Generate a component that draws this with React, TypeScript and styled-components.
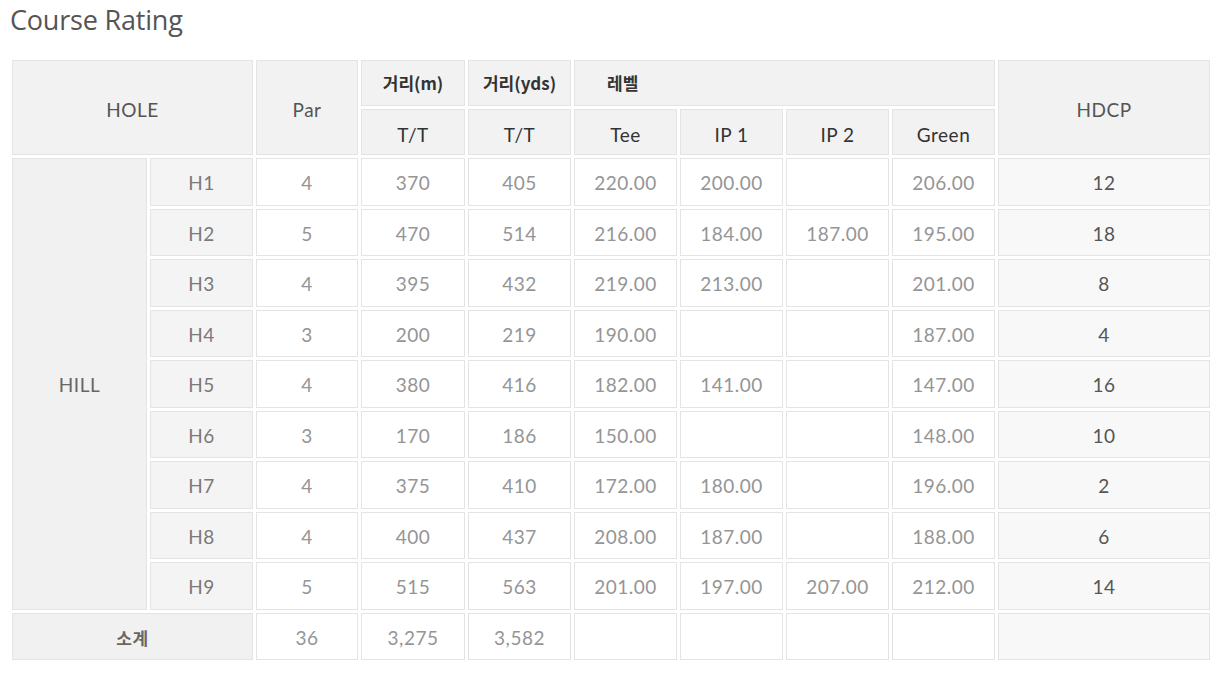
import { createGlobalStyle } from 'styled-components';
import styled from 'styled-components';

type Hole = {
  no: string;
  par: number;
  m: number;
  yds: number;
  tee: string;
  ip1: string;
  ip2: string;
  green: string;
  hdcp: number;
};

const holes: Hole[] = [
  { no: 'H1', par: 4, m: 370, yds: 405, tee: '220.00', ip1: '200.00', ip2: '', green: '206.00', hdcp: 12 },
  { no: 'H2', par: 5, m: 470, yds: 514, tee: '216.00', ip1: '184.00', ip2: '187.00', green: '195.00', hdcp: 18 },
  { no: 'H3', par: 4, m: 395, yds: 432, tee: '219.00', ip1: '213.00', ip2: '', green: '201.00', hdcp: 8 },
  { no: 'H4', par: 3, m: 200, yds: 219, tee: '190.00', ip1: '', ip2: '', green: '187.00', hdcp: 4 },
  { no: 'H5', par: 4, m: 380, yds: 416, tee: '182.00', ip1: '141.00', ip2: '', green: '147.00', hdcp: 16 },
  { no: 'H6', par: 3, m: 170, yds: 186, tee: '150.00', ip1: '', ip2: '', green: '148.00', hdcp: 10 },
  { no: 'H7', par: 4, m: 375, yds: 410, tee: '172.00', ip1: '180.00', ip2: '', green: '196.00', hdcp: 2 },
  { no: 'H8', par: 4, m: 400, yds: 437, tee: '208.00', ip1: '187.00', ip2: '', green: '188.00', hdcp: 6 },
  { no: 'H9', par: 5, m: 515, yds: 563, tee: '201.00', ip1: '197.00', ip2: '207.00', green: '212.00', hdcp: 14 },
];

const colWidths = [135, 103, 102, 104, 103, 103, 103, 103, 103, 212];

const GlobalStyle = createGlobalStyle`
  * { box-sizing: border-box; }
  body {
    margin: 0;
    background: #fff;
    font-family: Lato, "Noto Sans CJK KR", sans-serif;
  }
`;

export default function App() {
  return (
    <Page>
      <GlobalStyle />
      <Title>Course Rating</Title>
      <Table>
        <colgroup>
          {colWidths.map((w, i) => (
            <col key={i} style={{ width: w }} />
          ))}
        </colgroup>
        <thead>
          <tr>
            <Th colSpan={2} rowSpan={2}>HOLE</Th>
            <Th rowSpan={2}>Par</Th>
            <Th $ko>거리(m)</Th>
            <Th $ko>거리(yds)</Th>
            <Th $ko colSpan={4} $left>
              레벨
            </Th>
            <Th rowSpan={2}>HDCP</Th>
          </tr>
          <tr>
            <Th $dark>T/T</Th>
            <Th $dark>T/T</Th>
            <Th $dark>Tee</Th>
            <Th $dark>IP 1</Th>
            <Th $dark>IP 2</Th>
            <Th $dark>Green</Th>
          </tr>
        </thead>
        <tbody>
          {holes.map((h, i) => (
            <tr key={h.no}>
              {i === 0 && <Course rowSpan={9}>HILL</Course>}
              <HoleCell>{h.no}</HoleCell>
              <Td>{h.par}</Td>
              <Td>{h.m}</Td>
              <Td>{h.yds}</Td>
              <Td>{h.tee}</Td>
              <Td>{h.ip1}</Td>
              <Td>{h.ip2}</Td>
              <Td>{h.green}</Td>
              <Hdcp>{h.hdcp}</Hdcp>
            </tr>
          ))}
          <tr>
            <Course colSpan={2} $ko>
              소계
            </Course>
            <Td>36</Td>
            <Td>3,275</Td>
            <Td>3,582</Td>
            <Td />
            <Td />
            <Td />
            <Td />
            <Hdcp />
          </tr>
        </tbody>
      </Table>
    </Page>
  );
}

const Page = styled.div`
  padding: 3px 0 0 9px;
`;

const Title = styled.h2`
  margin: 0 0 0 1px;
  height: 54px;
  font-family: "Open Sans", "Noto Sans", sans-serif;
  font-weight: 400;
  font-size: 27px;
  line-height: 34px;
  color: #555;
  letter-spacing: -0.2px;
`;

const Table = styled.table`
  width: 1204px;
  table-layout: fixed;
  border-collapse: separate;
  border-spacing: 3px;
  font-size: 19px;
  letter-spacing: 0.5px;
`;

const Cell = styled.td`
  border: 1px solid #e4e4e4;
  text-align: center;
  vertical-align: middle;
  padding: 2px 0 0;
`;

const Th = styled(Cell).attrs({ as: 'th' })<{ $ko?: boolean; $dark?: boolean; $left?: boolean }>`
  height: 46px;
  background: #f2f2f2;
  font-weight: ${({ $ko }) => ($ko ? 700 : 400)};
  font-family: ${({ $ko }) =>
    $ko ? '"Noto Sans CJK KR", sans-serif' : 'Lato, "Noto Sans CJK KR", sans-serif'};
  font-size: ${({ $ko }) => ($ko ? '17px' : '19px')};
  letter-spacing: ${({ $ko }) => ($ko ? '0' : '0.5px')};
  color: ${({ $ko, $dark }) => ($ko ? '#333' : $dark ? '#333' : '#555')};
  text-align: ${({ $left }) => ($left ? 'left' : 'center')};
  padding-left: ${({ $left }) => ($left ? '32px' : '0')};
  padding-top: ${({ $ko }) => ($ko ? '0' : '4px')};
  padding-bottom: ${({ $ko }) => ($ko ? '2px' : '0')};
`;

const Td = styled(Cell)`
  height: 47.5px;
  background: #fff;
  color: #959595;
`;

const HoleCell = styled(Cell)`
  background: #f4f4f4;
  color: #7a7a7a;
`;

const Course = styled(Cell)<{ $ko?: boolean }>`
  background: #f1f1f1;
  color: #666;
  font-weight: ${({ $ko }) => ($ko ? 700 : 400)};
  font-family: ${({ $ko }) =>
    $ko ? '"Noto Sans CJK KR", sans-serif' : 'Lato, "Noto Sans CJK KR", sans-serif'};
  font-size: ${({ $ko }) => ($ko ? '17px' : '19px')};
`;

const Hdcp = styled(Cell)`
  background: #f8f8f8;
  color: #555;
`;
